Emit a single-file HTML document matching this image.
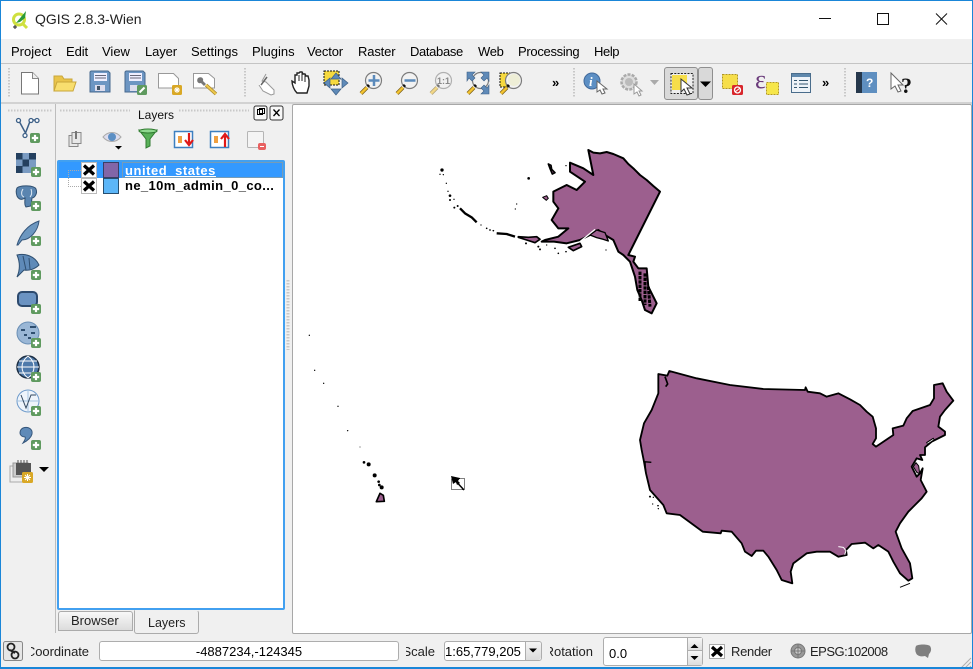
<!DOCTYPE html>
<html><head><meta charset="utf-8"><title>QGIS 2.8.3-Wien</title>
<style>
html,body{margin:0;padding:0;width:973px;height:669px;overflow:hidden;background:#f0f0f0}
body{position:relative;font-family:"Liberation Sans",sans-serif;font-size:13px;color:#000}
.a{position:absolute}
.t{position:absolute;white-space:nowrap;line-height:16px}
.clip{position:absolute;overflow:hidden;white-space:nowrap;line-height:16px;direction:rtl}
.box{position:absolute;box-sizing:border-box;background:#fff;border:1px solid #adadad;border-radius:3px}
svg{position:absolute;left:0;top:0}
</style></head><body>
<div class="a" style="left:0;top:1px;width:973px;height:38px;background:#fff"></div>
<div class="a" style="left:0;top:63px;width:973px;height:1px;background:#c4c4c4"></div>
<div class="a" style="left:0;top:102px;width:973px;height:2px;background:#d2d2d2"></div>

<div class="t" style="left:35px;top:11px;font-size:14px;color:#222">QGIS 2.8.3-Wien</div>

<div class="t" style="left:11px;top:44px">Project</div>
<div class="t" style="left:66px;top:44px;letter-spacing:-.1px">Edit</div>
<div class="t" style="left:102px;top:44px">View</div>
<div class="t" style="left:145px;top:44px;letter-spacing:-.1px">Layer</div>
<div class="t" style="left:191px;top:44px">Settings</div>
<div class="t" style="left:252px;top:44px">Plugins</div>
<div class="t" style="left:307px;top:44px;letter-spacing:-.15px">Vector</div>
<div class="t" style="left:358px;top:44px;letter-spacing:-.15px">Raster</div>
<div class="t" style="left:410px;top:44px;letter-spacing:-.35px">Database</div>
<div class="t" style="left:478px;top:44px;letter-spacing:-.3px">Web</div>
<div class="t" style="left:518px;top:44px;letter-spacing:-.3px">Processing</div>
<div class="t" style="left:594px;top:44px;letter-spacing:-.4px">Help</div>

<!-- select button -->
<div class="a" style="left:664px;top:67px;width:34px;height:33px;box-sizing:border-box;background:#d9d9d9;border:1px solid #8f8f8f;border-radius:3px"></div>
<div class="a" style="left:698px;top:67px;width:15px;height:33px;box-sizing:border-box;background:#d9d9d9;border:1px solid #8f8f8f;border-radius:3px"></div>

<!-- dock -->
<div class="a" style="left:55px;top:104px;width:1px;height:529px;background:#bdbdbd"></div>
<div class="t" style="left:138px;top:107px;font-size:12px;color:#111">Layers</div>
<div class="a" style="left:57px;top:160px;width:228px;height:450px;box-sizing:border-box;background:#fff;border:2px solid #42a0f0;border-radius:2px"></div>
<div class="a" style="left:59px;top:162px;width:224px;height:16px;background:#3399ff"></div>
<div class="t" style="left:125px;top:163px;font-weight:bold;color:#fff;text-decoration:underline;letter-spacing:.55px">united_states</div>
<div class="t" style="left:125px;top:178px;font-weight:bold;letter-spacing:.38px">ne_10m_admin_0_co...</div>

<!-- tabs -->
<div class="a" style="left:58px;top:611px;width:75px;height:20px;box-sizing:border-box;background:linear-gradient(#f8f8f8,#dcdcdc);border:1px solid #ababab;border-radius:3px 3px 0 0"></div>
<div class="a" style="left:134px;top:610px;width:65px;height:24px;box-sizing:border-box;background:#f0f0f0;border:1px solid #ababab;border-top-color:transparent;border-radius:0 3px 3px 3px"></div>
<div class="t" style="left:71px;top:613px;color:#222">Browser</div>
<div class="t" style="left:148px;top:615px;font-size:12.500px;color:#222">Layers</div>

<!-- canvas -->
<div class="a" style="left:292px;top:104px;width:680px;height:530px;box-sizing:border-box;background:#fff;border:1px solid #a8a8a8;border-radius:2px"></div>

<svg width="973" height="669" viewBox="0 0 973 669">
<defs>
<symbol id="plus" viewBox="0 0 11 11" overflow="visible"><rect width="11" height="11" rx="2" fill="#5f9a5f"/><path d="M5.500 2v7M2 5.500h7" stroke="#fff" stroke-width="2.400"/></symbol>
<symbol id="mag" viewBox="0 0 24 24" overflow="visible"><path d="M2 22.500L8 16.500" stroke="#7a5f18" stroke-width="4"/><path d="M2 22.500L8 16.500" stroke="#f4c430" stroke-width="2.400"/><circle cx="14.500" cy="9.500" r="8" fill="#f2f2f2" stroke="#7c7c7c" stroke-width="1.200"/><path d="M8.500 15.500l1.500-1.500" stroke="#111" stroke-width="3"/></symbol>
</defs>

<!-- window controls -->
<path d="M819 18.500h12" stroke="#111" stroke-width="1"/>
<rect x="877.500" y="13.500" width="11" height="11" fill="none" stroke="#111"/>
<path d="M936 13.500l11 11M947 13.500l-11 11" stroke="#111" stroke-width="1"/>
<!-- qgis logo -->
<circle cx="19" cy="19.500" r="5.500" fill="#fff" stroke="#cfe03f" stroke-width="3"/>
<path d="M23 24l4 4" stroke="#cfe03f" stroke-width="3"/>
<path d="M16 23L26 11l-1 7-5 4z" fill="#2a9a38"/><path d="M13 27h4M15 25v4" stroke="#222" stroke-width="1"/>

<!-- handles -->
<g fill="none" stroke="#c8c8c8" stroke-width="2" stroke-dasharray="1.500 1.500">
<path d="M9 68v30M245 68v30M574 68v30M845 68v30"/><path d="M8 110.500h44M60 110.500h70M179 110.500h70"/>
<path d="M288 280v70" stroke-width="3"/>
</g>

<!-- new -->
<path d="M21.500 72.500h11l6 6v15.500h-17z" fill="#fff" stroke="#777"/><path d="M32.500 72.500v6h6" fill="#eee" stroke="#888"/>
<!-- open -->
<path d="M54 76h8l2 3h8v12H54z" fill="#e9c44a" stroke="#c9a63a"/><path d="M54 91l3-9h19l-3 9z" fill="#f8de6e" stroke="#c9a63a"/>
<!-- save -->
<path d="M91 71h17l2 2v19H90V72z" fill="#6d96c3" stroke="#46688e"/><rect x="94" y="73" width="13" height="8" fill="#eef"/><path d="M95 75.500h11M95 78h11" stroke="#667" /><rect x="95" y="85" width="10" height="6" fill="#dde"/><rect x="97" y="86" width="3" height="4" fill="#456"/>
<!-- save as -->
<path d="M126 71h17l2 2v19h-20V72z" fill="#6d96c3" stroke="#46688e"/><rect x="129" y="73" width="13" height="8" fill="#eef"/><path d="M130 75.500h11M130 78h11" stroke="#667"/><rect x="130" y="85" width="8" height="6" fill="#dde"/>
<rect x="137" y="85" width="10" height="10" rx="1.500" fill="#5f9a5f"/><path d="M139.500 92.500l5-5" stroke="#fff" stroke-width="2"/>
<!-- new composer -->
<path d="M158.500 73.500h15l5 5v9.500h-20z" fill="#fff" stroke="#999"/><rect x="172" y="85" width="10" height="10" rx="1.500" fill="#d9a826"/><path d="M174 90h6M177 87v6M175 88l4 4M179 88l-4 4" stroke="#fff"/>
<!-- composer manager -->
<path d="M193.500 73.500h15l6 5v9.500h-21z" fill="#fff" stroke="#999"/>
<path d="M198 78c3-2 6 0 5 3l3 3-2 2-3-3c-3 1-5-2-3-5z" fill="#777"/><path d="M206 85l10 9" stroke="#a8872a" stroke-width="3.500"/><path d="M206 85l10 9" stroke="#edc84c" stroke-width="2"/>

<!-- touch -->
<path d="M266 74l-4 7 4 1 5 5 3 3v4l-3 1-8-4-4-6" fill="#fff" stroke="#999"/><path d="M261 85l6-8" stroke="#666" stroke-width="1.500"/>
<!-- pan -->
<path d="M297 93c-3-3-5-8-5-12l3 2 0-8h2v-2h2l1-1h2l1 2h2l1 2h2l1 4 0 6-2 7z" fill="#fff" stroke="#222" stroke-width="1.400"/><path d="M299 75v6M302 73v8M305 75v7" stroke="#222"/>
<!-- pan to selection -->
<rect x="324" y="71" width="15" height="14" fill="#f6d93f" stroke="#111" stroke-dasharray="2 1"/>
<path d="M336 73l5 6h-10zM336 95l-5-6h10zM324 83l6-5v10zM348 83l-6-5v10z" fill="#5f8ab8" stroke="#3c5f86" stroke-width=".7"/>
<!-- zoom in -->
<use href="#mag" x="359" y="71" width="24" height="24"/><path d="M368.500 80.500h11M374 75v11" stroke="#5b8abb" stroke-width="2.500"/>
<!-- zoom out -->
<use href="#mag" x="395" y="71" width="24" height="24"/><path d="M404.500 80.500h11" stroke="#5b8abb" stroke-width="2.500"/>
<!-- 1:1 -->
<g opacity=".55"><use href="#mag" x="429" y="71" width="24" height="24"/></g>
<text x="437" y="84" font-family="Liberation Sans" font-size="9" font-weight="bold" fill="#888">1:1</text>
<!-- full -->
<use href="#mag" x="466" y="71" width="24" height="24"/><path d="M467 72h8l-3 3 3 3-3 3-3-3-2 3zM489 72h-8l3 3-3 3 3 3 3-3 2 3zM489 94h-8l3-3-3-3 3-3 3 3 2-3z" fill="#5f8ab8" stroke="#3c5f86" stroke-width=".6"/>
<!-- zoom to sel -->
<rect x="500" y="73" width="12" height="14" fill="#f6d93f" stroke="#111" stroke-dasharray="2 1"/>
<use href="#mag" x="499" y="71" width="24" height="24"/><circle cx="514" cy="80" r="6" fill="#eeeed6"/>

<text x="552" y="87" font-family="Liberation Sans" font-size="13" font-weight="bold">»</text>
<text x="822" y="87" font-family="Liberation Sans" font-size="13" font-weight="bold">»</text>

<!-- identify -->
<circle cx="592" cy="81" r="8" fill="#5c8fc4" stroke="#41699a"/><text x="589" y="86" font-family="Liberation Serif" font-size="13" font-style="italic" font-weight="bold" fill="#fff">i</text>
<path d="M597 81l0 11 3-2 2 4 3-1-2-4h4z" fill="#fff" stroke="#666"/>
<!-- action -->
<circle cx="629" cy="82" r="7.500" fill="#ddd" stroke="#aaa" stroke-width="2.500" stroke-dasharray="3 1.200"/><circle cx="629" cy="82" r="4" fill="#bbb"/><path d="M634 84l0 10 3-2 2 4 2-1-2-4h3z" fill="#fff" stroke="#999"/>
<path d="M650 80h9l-4.500 5z" fill="#aaa"/>
<!-- select -->
<rect x="671" y="73.500" width="22" height="20" fill="#eee" stroke="#222" stroke-dasharray="2 1.300"/><rect x="672" y="75" width="15" height="15" fill="#f6de4a"/>
<path d="M681 79v13l3-3 3 6 3-1-3-6h5z" fill="#fff" stroke="#333"/>
<path d="M700 81.500h11l-5.500 5.500z" fill="#000"/>
<!-- deselect -->
<rect x="722.500" y="74.500" width="15" height="14" fill="#f6de4a" stroke="#b0961e" stroke-dasharray="2 1"/>
<rect x="732" y="85" width="11" height="10" rx="1.500" fill="#d8262c"/><circle cx="737.500" cy="90" r="3" fill="none" stroke="#fff" stroke-width="1.300"/><path d="M735 92l5-4" stroke="#fff"/>
<!-- expression -->
<text x="755" y="88" font-family="Liberation Serif" font-size="26" fill="#6a3a7a">ε</text>
<rect x="766.500" y="82.500" width="12" height="12" fill="#f6e64a" stroke="#b59b1e" stroke-dasharray="2 1"/>
<!-- table -->
<rect x="791.500" y="73.500" width="19" height="19" fill="#eef3f8" stroke="#4a6d8c"/><rect x="792" y="74" width="18" height="3" fill="#5f88ac"/><path d="M794 80.500h3M799 80.500h9M794 84h3M799 84h9M794 87.500h3M799 87.500h9" stroke="#33566f"/>
<!-- help -->
<rect x="856" y="72" width="21" height="21" fill="#5f8fc0"/><rect x="856" y="72" width="6" height="21" fill="#26384c"/><text x="866" y="87" font-family="Liberation Sans" font-size="12" font-weight="bold" fill="#fff">?</text>
<!-- whats this -->
<path d="M891 73v16l4-3 3 6 3-1-3-6h5z" fill="#fff" stroke="#666"/><text x="901" y="93" font-family="Liberation Serif" font-size="22" font-weight="bold" fill="#111">?</text>

<!-- left toolbar -->
<path d="M18.500 120l7 13 5-13h6" fill="none" stroke="#3c5f86" stroke-width="1.500"/><g fill="#fff" stroke="#3c5f86" stroke-width="1.300"><circle cx="18.500" cy="120.500" r="2"/><circle cx="31" cy="120.500" r="2"/><circle cx="37" cy="120.500" r="2"/><circle cx="25" cy="135.500" r="2"/></g><use href="#plus" x="30" y="133" width="10" height="10"/>
<rect x="16" y="153" width="20" height="20" fill="#7a9bc2"/><path d="M16 153h6.500v6.500h-6.500zM29 153h7v6.500h-7zM22.500 159.500h6.500v7h-6.500zM16 166h6.500v7h-6.500z" fill="#24405f"/><use href="#plus" x="31" y="167" width="10" height="10"/>
<path d="M17 188c3-3 17-3 19 1 2 5-2 9-4 9l-1 8-5 1c-2-2-1-6-1-9-3 2-6 2-8-2-1-3-1-6 0-8z" fill="#5a85b0" stroke="#2f4f70"/><path d="M23 189c-2 3-2 7 1 8M31 189c1 3 1 6-1 8" fill="none" stroke="#dfe9f3"/><use href="#plus" x="31" y="201" width="10" height="10"/>
<path d="M17 245c3-10 10-20 22-24-1 10-9 19-17 19l-4 5z" fill="#6c97c0" stroke="#34557a"/><use href="#plus" x="31" y="236" width="10" height="10"/>
<path d="M17 255c8-2 18 1 22 10-4 4-10 6-15 5l-7 7c3-7 3-15 0-22z" fill="#5f8ab8" stroke="#2f4f70"/><path d="M23 256l3 14M29 258l1 11" stroke="#2f4f70"/><use href="#plus" x="31" y="270" width="10" height="10"/>
<rect x="18" y="292" width="19" height="14" rx="4" fill="#6b93c2" stroke="#2d4a6e" stroke-width="2"/><use href="#plus" x="31" y="304" width="10" height="10"/>
<circle cx="28" cy="333" r="11" fill="#9ab7d6" stroke="#6a8fb5"/><path d="M21 330h4M30 327h6M24 335h3M31 333h4M28 338h3" stroke="#2f4f70" stroke-width="2"/><use href="#plus" x="31" y="338" width="10" height="10"/>
<circle cx="28" cy="367" r="11" fill="#4f7aaa" stroke="#1d2f44" stroke-width="1.500"/><path d="M17 367h22M28 356c-8 6-8 16 0 22M28 356c8 6 8 16 0 22M19 361h18M19 373h18" stroke="#fff" fill="none"/><use href="#plus" x="31" y="372" width="10" height="10"/>
<circle cx="28" cy="401" r="11" fill="#eef4fb" stroke="#6f9bcb"/><path d="M17 401h22M28 390v22" stroke="#a6c4e2"/><path d="M21 395l5 13 5-13h5" fill="none" stroke="#33485f"/><use href="#plus" x="31" y="406" width="10" height="10"/>
<path d="M23 428c5-2 10 1 9 6-1 4-5 7-9 9 2-3 3-5 2-6-3 0-5-2-5-4 0-2 1-4 3-5z" fill="#5f8ab8" stroke="#34557a"/><use href="#plus" x="31" y="440" width="10" height="10"/>
<rect x="10" y="466" width="15" height="16" fill="#eee" stroke="#aaa"/><rect x="13" y="463" width="15" height="14" fill="#ccc" stroke="#999"/><rect x="16" y="463" width="15" height="12" fill="#555"/><path d="M18 460v3M21 460v3M24 460v3M27 460v3" stroke="#555"/>
<rect x="22" y="472" width="11" height="11" rx="1.500" fill="#d9a826"/><path d="M24 477.500h7M27.500 474v7M25 475l5 5M30 475l-5 5" stroke="#fff"/>
<path d="M39 467h10l-5 5z" fill="#000"/>

<!-- dock buttons -->
<rect x="254" y="106" width="13" height="14" rx="2" fill="#f7f7f7" stroke="#333"/><rect x="257.500" y="109.500" width="5" height="5" fill="none" stroke="#000"/><rect x="259.500" y="108.500" width="5" height="5" fill="none" stroke="#000"/>
<rect x="270" y="106" width="13" height="14" rx="2" fill="#f7f7f7" stroke="#333"/><path d="M273.500 109.500l6 6.500M279.500 109.500l-6 6.500" stroke="#000" stroke-width="1.300"/>

<!-- layer tools -->
<rect x="69" y="135.500" width="9" height="11" fill="#e8e8e8" stroke="#888"/><rect x="72" y="132.500" width="9" height="11" fill="#e8e8e8" stroke="#888"/>
<path d="M76 131v8" stroke="#777" stroke-width="2"/>
<path d="M103 137c5-6 13-6 18 0-5 6-13 6-18 0z" fill="#dde" stroke="#aaa"/><circle cx="112" cy="137" r="4" fill="#5c8fc4"/><path d="M115 146h7l-3.500 3.500z" fill="#000"/>
<path d="M139 130h18l-7 9v7l-4 2v-9z" fill="#58b058" stroke="#2f7a2f"/><ellipse cx="148" cy="131" rx="9" ry="2" fill="#8ed88e" stroke="#2f7a2f"/>
<rect x="174.500" y="131.500" width="18" height="16" fill="#fff" stroke="#3d7fc0" stroke-width="1.500"/><rect x="178" y="136" width="4" height="7" fill="#f0a040"/><path d="M189 133v10M185 140l4 5 4-5" fill="none" stroke="#e01818" stroke-width="2.200"/>
<rect x="210.500" y="131.500" width="18" height="16" fill="#fff" stroke="#3d7fc0" stroke-width="1.500"/><rect x="214" y="136" width="4" height="7" fill="#f0a040"/><path d="M225 147v-11M221 139l4-5 4 5" fill="none" stroke="#e01818" stroke-width="2.200"/>
<rect x="247.500" y="131.500" width="16" height="16" rx="1" fill="#f4f4f4" stroke="#b5b5b5"/><rect x="258" y="143" width="8" height="7" rx="2" fill="#e86060"/><path d="M260 146.500h4" stroke="#fff"/>

<!-- tree -->
<path d="M68.500 170v16M68 170.500h13M68 186.500h13" stroke="#aaa" stroke-dasharray="1 1" fill="none"/>
<rect x="81.500" y="162.500" width="15" height="15" fill="#fff" stroke="#bbb"/><path d="M84 165.500l10 9M94 165.500l-10 9" stroke="#000" stroke-width="3.200"/>
<rect x="81.500" y="178.500" width="15" height="15" fill="#fff" stroke="#bbb"/><path d="M84 181.500l10 9M94 181.500l-10 9" stroke="#000" stroke-width="3.200"/>
<rect x="103.500" y="162.500" width="15" height="15" fill="#8266a8" stroke="#3a3f66"/>
<rect x="103.500" y="178.500" width="15" height="15" fill="#5cb6f8" stroke="#274f70"/>
<rect x="122.500" y="162.500" width="160" height="15" fill="none" stroke="#e8a040" stroke-dasharray="1 1" stroke-width=".7"/>

<!-- Alaska -->
<g transform="translate(430 140) scale(.33333)" fill="#9c5f8e" stroke="#000" stroke-width="6" stroke-linejoin="round">
<path d="M475 30L490 38 510 40 530 36 550 42 580 55 595 72 610 85 630 105 650 120 670 138 690 155 595 345 615 350 610 365 625 385 650 385 655 440 680 490 665 520 645 510 635 480 622 450 615 410 600 365 580 345 565 335 550 300 525 285 505 270 480 285 450 300 410 310 372 305 335 305 345 300 385 290 415 265 385 265 365 240 385 205 370 185 370 155 410 135 440 150 465 125 420 95 420 68 460 85 490 105Z"/>
<path d="M415 322L450 310 455 320 430 332Z" stroke-width="5"/>
<path d="M338 172l12-5 5 8-6 6z" stroke-width="3"/>
<path d="M355 72l8 4 2 12 10 10-8 4-6-14z" stroke-width="5"/>
<path d="M265 290l30 2 25-2 10 8-15 10-25-8-25-8z" stroke-width="5"/>
<path d="M200 280l30 2 25 8" fill="none" stroke-width="7"/>
<path d="M90 205l15 15 20 12 15 15" fill="none" stroke-width="7"/>
<path d="M480 285l20-15 25 8 10 25-15-5-20-5z" stroke-width="4"/>
<path d="M450 305L495 268" stroke="#fff" stroke-width="4"/>
<path d="M630 395v90M645 400v95M655 440l5 60" fill="none" stroke-width="9" stroke-dasharray="10 3"/>
<circle cx="36" cy="90" r="5" fill="#000" stroke="none"/>
<g fill="#000" stroke="none"><circle cx="30" cy="103" r="2"/><circle cx="40" cy="104" r="2"/><circle cx="49" cy="130" r="2"/><circle cx="54" cy="154" r="2"/><circle cx="60" cy="167" r="4"/><circle cx="60" cy="180" r="3"/><circle cx="72" cy="178" r="2"/><circle cx="73" cy="203" r="3"/><circle cx="83" cy="198" r="3"/><circle cx="153" cy="255" r="2"/><circle cx="170" cy="265" r="2.500"/><circle cx="180" cy="270" r="2.500"/><circle cx="190" cy="272" r="2.500"/><circle cx="260" cy="192" r="2"/><circle cx="256" cy="207" r="2"/><circle cx="296" cy="115" r="4"/><circle cx="408" cy="77" r="2"/><circle cx="288" cy="310" r="3"/><circle cx="325" cy="320" r="3"/><circle cx="330" cy="328" r="3"/><circle cx="375" cy="325" r="2.500"/><circle cx="385" cy="340" r="2.500"/><circle cx="408" cy="335" r="2.500"/><circle cx="528" cy="330" r="2"/><circle cx="350" cy="315" r="2"/></g>
</g>

<!-- CONUS -->
<g transform="translate(630 360) scale(.33333)" fill="#9c5f8e" stroke="#000" stroke-width="5.500" stroke-linejoin="round">
<path d="M85 42L112 47 118 33 200 55 300 75 400 87 525 90 527 82 533 95 570 100 590 110 625 100 660 118 690 135 710 155 728 170 738 205 738 235 728 252 738 260 750 252 790 225 788 205 820 197 830 175 848 153 900 135 912 115 912 75 938 70 950 95 970 122 945 150 930 170 925 200 945 215 945 225 905 245 885 262 885 285 870 285 877 300 860 295 845 320 860 350 870 340 878 325 872 360 890 395 875 415 855 435 835 455 810 490 797 515 815 565 840 610 847 655 835 662 810 640 790 605 775 575 745 555 730 565 705 548 665 552 648 570 650 585 625 590 600 575 560 575 530 580 490 610 482 635 487 670 455 660 440 630 415 590 400 572 378 572 365 588 345 575 335 550 305 515 275 512 272 520 218 515 150 465 110 460 100 435 60 390 48 340 42 305 35 270 30 240 42 190 65 150 85 100Z"/>
<path d="M890 250l22-14" fill="none" stroke-width="7"/><path d="M892 250l18-12" stroke="#fff" stroke-width="2.500" fill="none"/>
<path d="M850 320l8-12 8 10 3 22-8-2z" stroke-width="3"/>
<path d="M105 50l8 22-6 8" fill="none" stroke-width="5"/>
<path d="M42 305l22 2M45 305l2 28" fill="none" stroke-width="4"/>
<path d="M625 560l15 2 8 10-4 12" fill="none" stroke="#fff" stroke-width="3"/>
<path d="M810 682l30-12" fill="none" stroke-width="3"/>
<g fill="#000" stroke="none"><circle cx="60" cy="410" r="3"/><circle cx="70" cy="412" r="2"/><circle cx="68" cy="432" r="2"/><circle cx="84" cy="437" r="2.500"/><circle cx="85" cy="446" r="2"/></g>
</g>

<!-- Hawaii -->
<g transform="translate(300 330) scale(.33333)">
<path d="M240 490l10 6 3 18-24 1z" fill="#9c5f8e" stroke="#000" stroke-width="5" stroke-linejoin="round"/>
<g fill="#000"><circle cx="28" cy="16" r="2"/><circle cx="44" cy="121" r="2"/><circle cx="71" cy="160" r="2"/><circle cx="114" cy="229" r="2"/><circle cx="143" cy="302" r="2"/><circle cx="180" cy="351" r="2.500" fill="#aaa"/><circle cx="192" cy="397" r="4"/><circle cx="206" cy="403" r="6"/><circle cx="224" cy="436" r="6"/><circle cx="236" cy="455" r="4"/><circle cx="238" cy="465" r="4"/><circle cx="245" cy="472" r="6"/></g>
</g>
<!-- cursor -->
<rect x="451.500" y="478.500" width="13" height="11" fill="none" stroke="#000" stroke-dasharray="1 1"/>
<path d="M452 477l12 13" stroke="#000" stroke-width="1.500"/><path d="M451 476l9 2-2 3 2 2-3 2-1-3-3 2z" fill="#000"/>

<!-- status -->
<rect x="3.500" y="641.500" width="19" height="19" rx="2" fill="#e6e6e6" stroke="#888"/>
<circle cx="11" cy="647" r="3.500" fill="none" stroke="#222" stroke-width="1.800"/><circle cx="15" cy="655" r="3.500" fill="none" stroke="#222" stroke-width="1.800"/><path d="M10 650l5 3" stroke="#222" stroke-width="2"/>
<rect x="709.500" y="644.500" width="15" height="14" fill="#fff" stroke="#aaa"/><path d="M712 647l10 9M722 647l-10 9" stroke="#000" stroke-width="3.200"/>
<circle cx="798" cy="651" r="7" fill="#999" stroke="#777"/><circle cx="798" cy="651" r="3.500" fill="#ccc" stroke="#777"/><path d="M791 651h14M798 644v14" stroke="#777"/>
<path d="M916 646c2-2 12-2 14 0 2 3 1 6-1 8l-1 4-3-2c-4 1-8 0-9-3-1-2-1-5 0-7z" fill="#7f7f7f"/>
<path d="M961 668l10-10M965 668l6-6M969 668l2-2" stroke="#b0b0b0"/>
</svg>

<!-- status controls -->
<div class="clip" style="left:31px;top:644px;width:58px;color:#222;letter-spacing:-.05px">Coordinate</div>
<div class="box" style="left:99px;top:641px;width:300px;height:20px;text-align:center;line-height:19px">-4887234,-124345</div>
<div class="clip" style="left:406px;top:644px;width:29px;color:#222">Scale</div>
<div class="box" style="left:444px;top:641px;width:98px;height:20px;line-height:19px;overflow:hidden;white-space:nowrap">1:65,779,205</div>
<div class="a" style="left:525px;top:642px;width:16px;height:18px;box-sizing:border-box;background:linear-gradient(#f4f4f4,#dcdcdc);border-left:1px solid #adadad;border-radius:0 3px 3px 0"></div>
<div class="clip" style="left:550px;top:644px;width:43px;color:#222">Rotation</div>
<div class="box" style="left:603px;top:637px;width:100px;height:29px;padding-left:5px;line-height:31px">0.0</div>
<div class="a" style="left:687px;top:638px;width:15px;height:13px;box-sizing:border-box;background:linear-gradient(#f6f6f6,#dedede);border-left:1px solid #adadad;border-bottom:1px solid #adadad"></div>
<div class="a" style="left:687px;top:651px;width:15px;height:14px;box-sizing:border-box;background:linear-gradient(#f6f6f6,#dedede);border-left:1px solid #adadad"></div>
<div class="t" style="left:731px;top:644px;color:#222;letter-spacing:-.3px">Render</div>
<div class="t" style="left:810px;top:644px;color:#222;letter-spacing:-.5px">EPSG:102008</div>

<svg width="973" height="669" viewBox="0 0 973 669" style="pointer-events:none">
<path d="M529 648.500h8l-4 4z" fill="#000"/>
<path d="M690.500 648h8l-4-4zM690.500 656h8l-4 4z" fill="#000"/>
</svg>

<!-- window border -->
<div class="a" style="left:0;top:0;width:973px;height:669px;box-sizing:border-box;border:1px solid #1a86d8;border-bottom-width:2px;pointer-events:none"></div>
</body></html>
